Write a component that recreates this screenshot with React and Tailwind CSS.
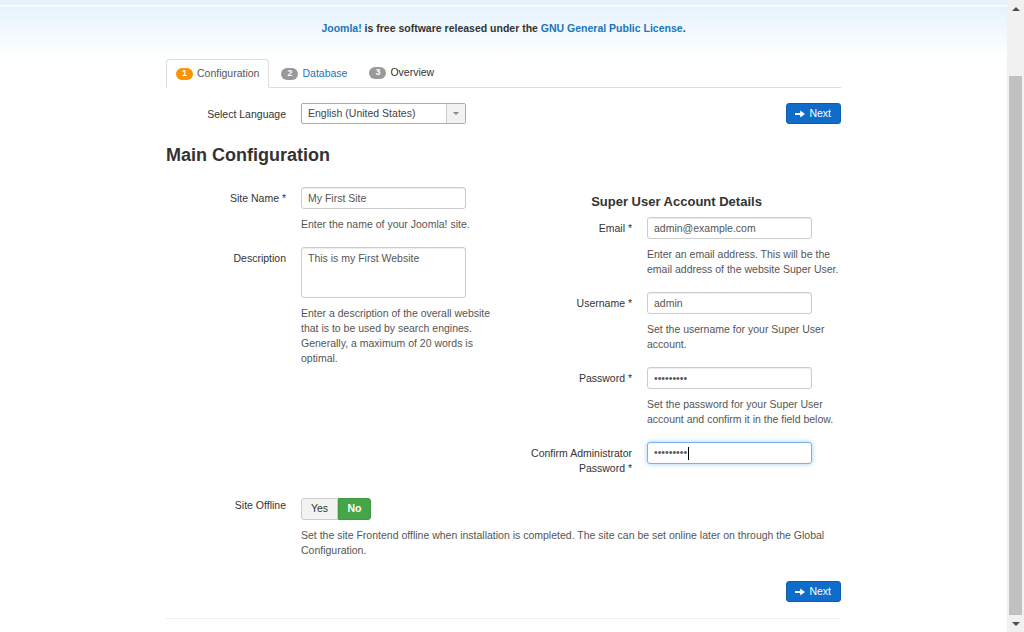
import React from "react";

const font = "font-['Liberation_Sans',Arial,Helvetica,sans-serif]";

function Badge({ n, color }) {
    return (
        <span className={`inline-flex h-[12px] w-[17px] items-center justify-center rounded-full text-[9px] font-bold leading-none text-white ${color}`}>
            {n}
        </span>
    );
}

function NextButton() {
    return (
        <button className="flex h-[21px] items-center gap-[4px] rounded-[3px] border border-[#0b5fb3] bg-[#0f6cc9] pl-[8px] pr-[9px] text-[10.5px] text-white">
            <svg width="10" height="8" viewBox="0 0 10 8" fill="white">
                <path d="M0 2.9h5.2V0.6L10 4 5.2 7.4V5.1H0z" />
            </svg>
            Next
        </button>
    );
}

function TextInput({ value }) {
    return (
        <input
            readOnly
            value={value}
            className="block h-[22px] w-[165px] rounded-[3px] border border-[#ccc] bg-white px-[6px] text-[10.5px] text-[#555] shadow-[inset_0_1px_1px_rgba(0,0,0,0.075)] outline-none"
        />
    );
}

function Help({ children }) {
    return <p className="mt-[8px] text-[10.5px] leading-[15px] text-[#555]">{children}</p>;
}

function Row({ label, children, last }) {
    return (
        <div className={`flex ${last ? "" : "mb-[15px]"}`}>
            <div className="w-[120px] shrink-0 pt-[4px] text-right text-[10.5px] leading-[15px] text-[#333]">
                {label}
            </div>
            <div className="ml-[15px] flex-1">{children}</div>
        </div>
    );
}

function Scrollbar() {
    return (
        <div className="flex w-[17px] shrink-0 flex-col bg-[#f1f1f1]">
            <div className="flex h-[17px] items-center justify-center">
                <div className="h-0 w-0 border-b-[4px] border-l-[4px] border-r-[4px] border-b-[#505050] border-l-transparent border-r-transparent" />
            </div>
            <div className="mx-[2px] mt-[59px] h-[539px] bg-[#c1c1c1]" />
            <div className="flex h-[17px] items-center justify-center">
                <div className="h-0 w-0 border-t-[4px] border-l-[4px] border-r-[4px] border-t-[#505050] border-l-transparent border-r-transparent" />
            </div>
        </div>
    );
}

export default function App() {
    return (
        <div className={`flex h-[632px] w-[1024px] overflow-hidden bg-white text-[#333] ${font}`}>
            <div className="flex-1">
                {/* top strip */}
                <div className="h-[5px] bg-[#e6f2fc]" />
                <div className="h-[2px] border-b border-[#f3f8fc] bg-white" />
                <div className="h-[52px] bg-gradient-to-b from-[#e6f3fd] to-white pt-[14px] text-center text-[10.5px] font-bold leading-[15px]">
                    <span className="text-[#1b75bb]">Joomla!</span> is free software released under the{" "}
                    <span className="text-[#1b75bb]">GNU General Public License</span>.
                </div>

                <div className="mx-auto w-[675px]">
                    {/* Tabs */}
                    <div className="flex border-b border-[#ddd]">
                        <div className="-mb-px mr-[2px] flex h-[29px] items-center gap-[4px] rounded-t-[4px] border border-[#ddd] border-b-white bg-white px-[9px] text-[10.5px] text-[#555]">
                            <Badge n="1" color="bg-[#f89406]" />
                            Configuration
                        </div>
                        <div className="-mb-px mr-[2px] flex h-[29px] items-center gap-[4px] border border-transparent px-[9px] text-[10.5px] text-[#1b75bb]">
                            <Badge n="2" color="bg-[#999]" />
                            Database
                        </div>
                        <div className="-mb-px flex h-[29px] items-center gap-[4px] border border-transparent px-[9px] pb-[2px] text-[10.5px] text-[#333]">
                            <Badge n="3" color="bg-[#999]" />
                            Overview
                        </div>
                    </div>

                    {/* Language */}
                    <div className="mt-[15px] flex items-center justify-between">
                        <div className="flex items-center">
                            <div className="w-[120px] pt-px text-right text-[10.5px] leading-[15px]">Select Language</div>
                            <div className="ml-[15px] flex h-[21px] w-[165px] items-center rounded-[2px] border border-[#aaa] bg-white">
                                <span className="flex-1 pl-[6px] text-[10.5px] text-[#444]">English (United States)</span>
                                <span className="flex h-full w-[19px] items-center justify-center border-l border-[#ccc] bg-[#f2f2f2]">
                                    <span className="h-0 w-0 border-t-[3px] border-l-[3px] border-r-[3px] border-t-[#888] border-l-transparent border-r-transparent" />
                                </span>
                            </div>
                        </div>
                        <NextButton />
                    </div>

                    <h3 className="mt-[21px] text-[18px] font-bold leading-[20px] text-[#333]">Main Configuration</h3>

                    {/* Two columns */}
                    <div className="mt-[22px] flex justify-between">
                        <div className="w-[330px]">
                            <Row label="Site Name *">
                                <TextInput value="My First Site" />
                                <Help>Enter the name of your Joomla! site.</Help>
                            </Row>
                            <Row label="Description" last>
                                <textarea
                                    readOnly
                                    value="This is my First Website"
                                    className="block h-[51px] w-[165px] resize-none rounded-[3px] border border-[#ccc] bg-white px-[6px] py-[3px] text-[10.5px] leading-[15px] text-[#555] shadow-[inset_0_1px_1px_rgba(0,0,0,0.075)] outline-none"
                                />
                                <Help>
                                    Enter a description of the overall website that is to be used by search engines.
                                    Generally, a maximum of 20 words is optimal.
                                </Help>
                            </Row>
                        </div>

                        <div className="w-[329px]">
                            <h4 className="mb-[5px] mt-[5px] text-center text-[13px] font-bold leading-[20px] text-[#333]">
                                Super User Account Details
                            </h4>
                            <Row label="Email *">
                                <TextInput value="admin@example.com" />
                                <Help>Enter an email address. This will be the email address of the website Super User.</Help>
                            </Row>
                            <Row label="Username *">
                                <TextInput value="admin" />
                                <Help>Set the username for your Super User account.</Help>
                            </Row>
                            <Row label="Password *">
                                <TextInput value="•••••••••" />
                                <Help>Set the password for your Super User account and confirm it in the field below.</Help>
                            </Row>
                            <Row
                                last
                                label={
                                    <>
                                        Confirm Administrator
                                        <br />
                                        Password *
                                    </>
                                }
                            >
                                <div className="flex h-[22px] w-[165px] items-center rounded-[3px] border border-[#7ab3e3] bg-white px-[6px] text-[10.5px] text-[#555] shadow-[0_0_5px_rgba(82,168,236,0.55)]">
                                    •••••••••
                                    <span className="ml-px h-[13px] w-px bg-black" />
                                </div>
                            </Row>
                        </div>
                    </div>

                    {/* Site offline */}
                    <div className="mt-[22px] flex">
                        <div className="w-[120px] shrink-0 text-right text-[10.5px] leading-[15px]">Site Offline</div>
                        <div className="ml-[15px] flex-1">
                            <div className="flex h-[22px]">
                                <span className="flex w-[37px] items-center justify-center rounded-l-[3px] border border-[#ccc] bg-[#f3f3f3] text-[10.5px] text-[#333]">
                                    Yes
                                </span>
                                <span className="flex w-[33px] items-center justify-center rounded-r-[3px] border border-[#3f9a3f] bg-[#46a546] text-[10.5px] font-bold text-white">
                                    No
                                </span>
                            </div>
                            <Help>
                                Set the site Frontend offline when installation is completed. The site can be set
                                online later on through the Global Configuration.
                            </Help>
                        </div>
                    </div>

                    <div className="mt-[23px] flex justify-end">
                        <NextButton />
                    </div>

                    <div className="mt-[16px] border-t border-[#eee]" />
                </div>
            </div>
            <Scrollbar />
        </div>
    );
}
